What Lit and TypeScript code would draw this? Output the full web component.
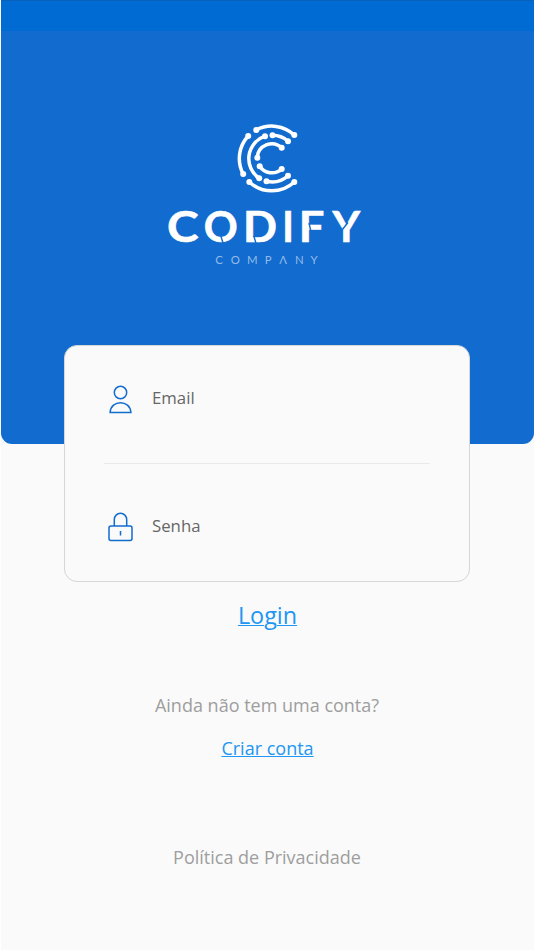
import { LitElement, html, svg, css } from "lit";
import { customElement } from "lit/decorators.js";

const LETTERS: [string, number, number][] = [
  ["C", 167, 31.6],
  ["O", 203.7, 34],
  ["D", 242.9, 34],
  ["I", 282.3, 11.6],
  ["F", 298.8, 25.6],
  ["Y", 332.4, 27.6],
];

@customElement("codify-logo")
class CodifyLogo extends LitElement {
  static styles = css`
    :host { display: block; }
    svg { display: block; }
    .arc { fill: none; stroke: #fff; stroke-width: 3.5; }
    .dot { fill: #fff; }
    .word { font: 700 42.7px Lato, sans-serif; fill: #fff; stroke: #fff; stroke-width: 0.6; }
    .sub { font: 400 11.4px Lato, sans-serif; fill: #93bbe9; }
    .cut { fill: none; stroke: #126bce; stroke-width: 1.4; }
  `;
  render() {
    const dots = [
      [256.3, 130], [294.3, 135], [248.2, 136], [243.2, 174], [265, 136.2], [259.2, 178.3],
      [272.5, 135.3], [288, 141.2], [281.7, 147.8], [257.3, 157.8], [259.7, 166.2], [281.7, 169],
      [249.3, 182], [294.3, 182], [266.5, 181.3], [288, 175.8],
    ];
    return html`<svg width="210" height="150" viewBox="160 120 210 150">
      <path class="arc" d="M256.3 130A33 33 0 0 1 294.3 135M248.2 136A33 33 0 0 0 243.2 174M249.3 182A33 33 0 0 0 294.3 182M265 136.2A23.7 23.7 0 0 0 259.2 178.3M272.5 135.3A23.7 23.7 0 0 1 288 141.2M266.5 181.3A23.7 23.7 0 0 0 288 175.8M281.7 147.8A14.5 14.5 0 0 0 257.3 157.8M259.7 166.2A14.5 14.5 0 0 0 281.7 169"/>
      ${dots.map(([x, y]) => svg`<circle class="dot" cx=${x} cy=${y} r="3"/>`)}
      ${LETTERS.map(([c, x, w]) => svg`<text class="word" x=${x} y="242.2" textLength=${w} lengthAdjust="spacingAndGlyphs">${c}</text>`)}
      <path class="cut" d="M220.6 235L223.4 244.5M253.8 236L256.2 244M309 223L310.8 231M348 222.5L342 230"/>
      <text class="sub" y="264.3" x="215.3 230.8 247 264.8 279.2 295 310.5">COMPΛNY</text>
    </svg>`;
  }
}

@customElement("app-root")
class AppRoot extends LitElement {
  static styles = css`
    :host {
      display: flex; flex-direction: column; align-items: center; box-sizing: border-box;
      width: 534px; height: 950px; background: #fafafa; overflow: hidden;
      font-family: "Open Sans", "Noto Sans", sans-serif; border-left: 1px solid #fff;
    }
    .hero {
      align-self: stretch; height: 444px; flex: none; background: #126bce;
      border-radius: 0 0 11px 11px; display: flex; flex-direction: column; align-items: center;
    }
    .status { align-self: stretch; height: 31px; background: #006bd2; border-top: 1px solid #0862bb; box-sizing: border-box; }
    .logo { margin: 89px 5px 0 0; }
    .card {
      width: 406px; height: 237px; flex: none; box-sizing: border-box; margin: -99px 1px 0 0;
      background: #fafafa; border: 1px solid #d4d6d8; border-radius: 13px; padding: 0 39px;
      z-index: 1;
    }
    .row { display: flex; align-items: center; height: 117px; box-sizing: border-box; padding-bottom: 10px; }
    .row + .row { border-top: 1px solid #e9e9e9; padding: 9px 0 0; }
    .icon { width: 32px; height: 34px; fill: none; stroke: #126bce; stroke-width: 1.5; }
    .label { margin: -3px 0 0 16px; font-size: 16.8px; line-height: 24px; color: #666; }
    .row + .row .label { margin-top: -2px; }
    .link, .note { line-height: 28px; font-size: 18px; white-space: nowrap; }
    .link { color: #2196f3; text-decoration: underline; text-decoration-thickness: 1px; }
    .note { color: #9e9e9e; }
    .login { margin-top: 15px; font-size: 23.4px; line-height: 36px; }
    .ask { margin-top: 58px; margin-right: 1px; }
    .create { margin-top: 15px; }
    .privacy { margin-top: 81px; margin-right: 1px; }
  `;
  render() {
    return html`
      <div class="hero"><div class="status"></div><codify-logo class="logo"></codify-logo></div>
      <div class="card">
        <div class="row">
          <svg class="icon" viewBox="-0.5 0 32 34"><circle cx="16" cy="9.5" r="6.2"/><path d="M5.6 29.5C6.3 16.5 25.7 16.5 26.4 29.5Z"/></svg>
          <span class="label">Email</span>
        </div>
        <div class="row">
          <svg class="icon" viewBox="-0.5 0 32 34"><rect x="4.5" y="16" width="23" height="14.5" rx="2"/><path d="M9.8 16V9.5A6.2 6.2 0 0 1 22.2 9.5V16M16 21V25.5"/></svg>
          <span class="label">Senha</span>
        </div>
      </div>
      <a class="link login">Login</a>
      <div class="note ask">Ainda não tem uma conta?</div>
      <a class="link create">Criar conta</a>
      <div class="note privacy">Política de Privacidade</div>
    `;
  }
}
